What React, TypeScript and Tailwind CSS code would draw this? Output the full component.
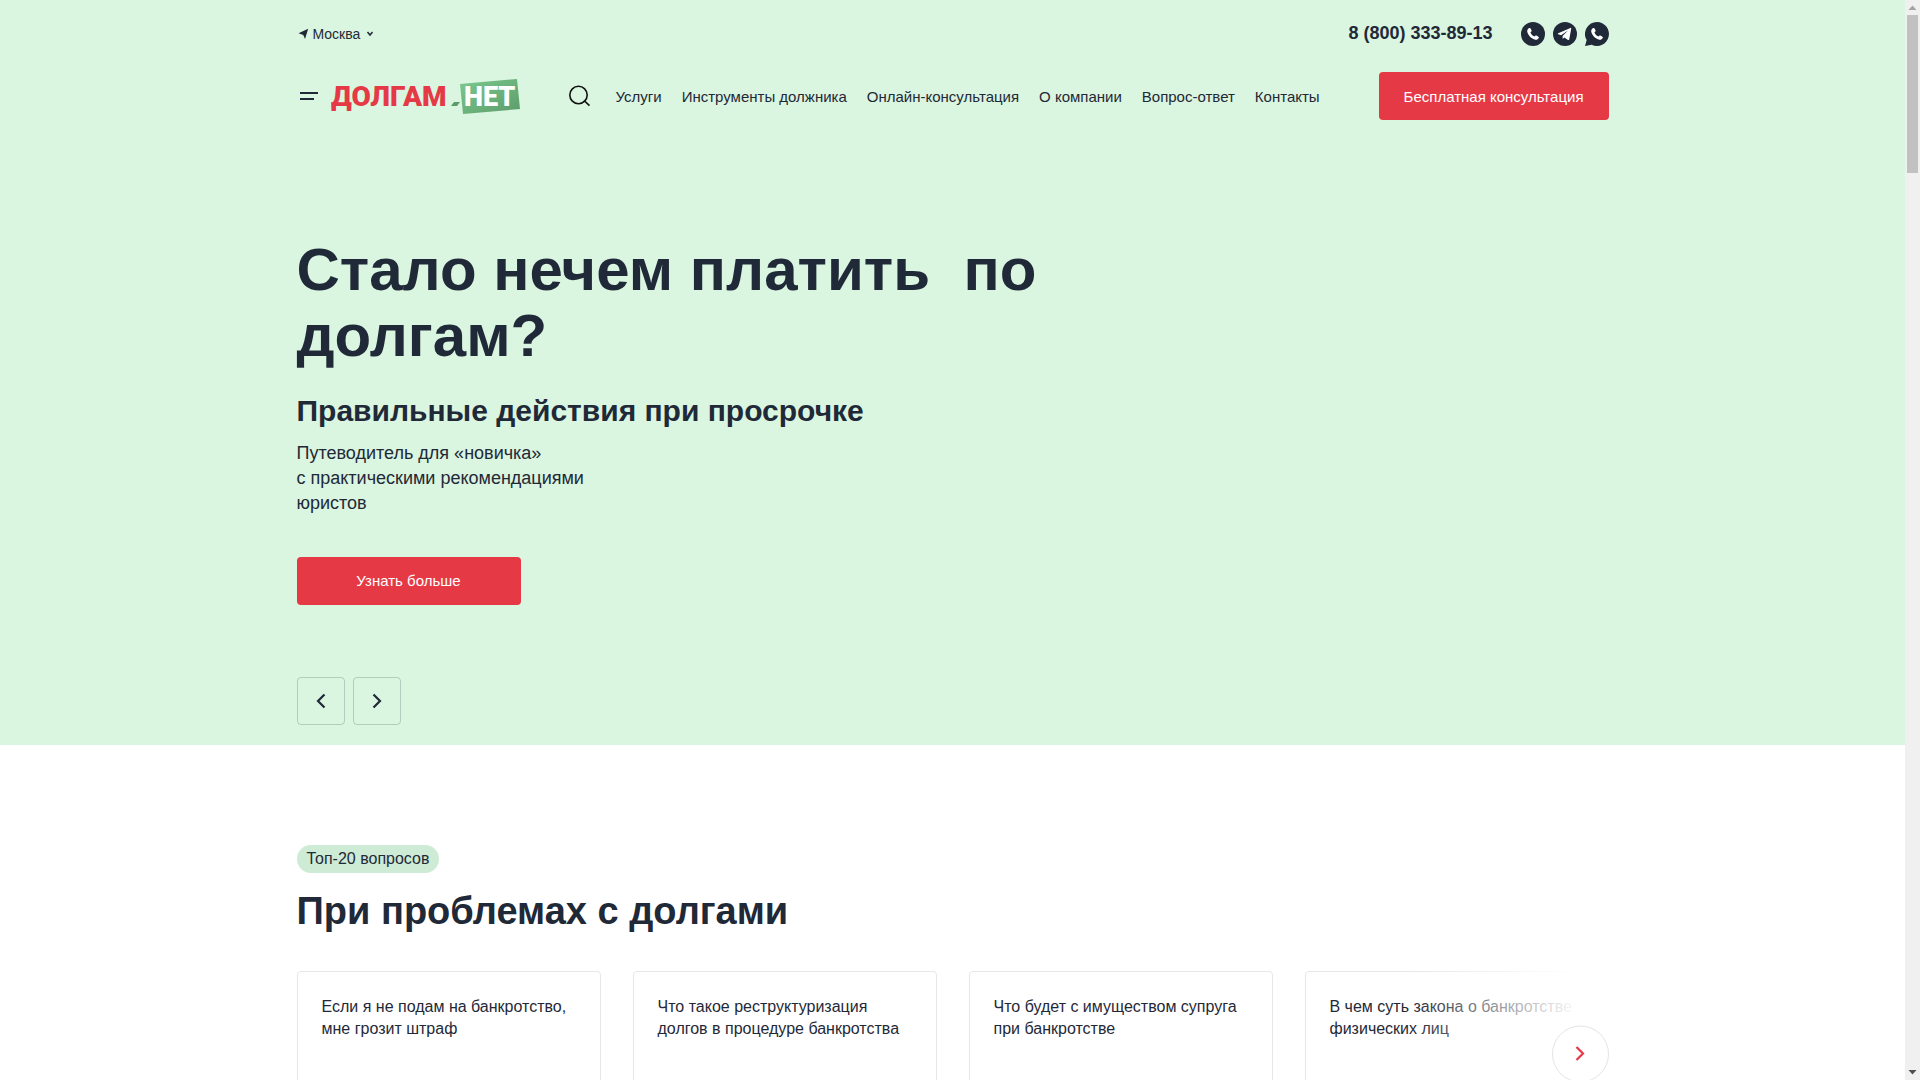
import React from "react";

const NAV = ["Услуги", "Инструменты должника", "Онлайн-консультация", "О компании", "Вопрос-ответ", "Контакты"];

const QUESTIONS = [
  "Если я не подам на банкротство, мне грозит штраф",
  "Что такое реструктуризация долгов в процедуре банкротства",
  "Что будет с имуществом супруга при банкротстве",
  "В чем суть закона о банкротстве физических лиц",
];

const HANDSET =
  "M8.300 6.100c-1.400.600-2.300 2-2.100 3.500.8 4 4.100 7.300 8.200 8.200 1.400.300 2.600-.4 3.300-1.700.3-.5.2-1-.3-1.300l-1.900-1.200c-.4-.3-.9-.2-1.200.1l-.9.8c-2-.8-3.600-2.400-3.900-4.300l.8-.6c.4-.3.500-.7.300-1.200l-1-1.900c-.3-.5-.8-.7-1.300-.4z";

function Chevron({ dir }: { dir: "left" | "right" }) {
  return (
    <svg width="16" height="16" viewBox="0 0 16 16" fill="none" stroke="currentColor" strokeWidth="2.2" aria-hidden="true">
      <path d={dir === "left" ? "M11.500 1.500 5 8l6.500 6.500" : "M4.500 1.500 11 8l-6.500 6.500"} />
    </svg>
  );
}

function Logo() {
  return (
    <a href="#" aria-label="Долгам.нет" className="ml-3 block shrink-0">
      <svg width="190" height="38" viewBox="0 0 190 38" aria-hidden="true">
        <defs>
          <linearGradient id="plate" x1="0" y1="0" x2="1" y2="1">
            <stop offset="0" stopColor="#7bc98d" />
            <stop offset="1" stopColor="#5c9c6b" />
          </linearGradient>
        </defs>
        <text x="0" y="29" fill="#e63946" fontFamily="Roboto, sans-serif" fontWeight="900" fontSize="28">
          ДОЛГАМ
        </text>
        <path d="M123 25h6l-3 4h-6z" fill="#5c9c6b" />
        <path d="M129 7 186 2l3 30-57 5z" fill="url(#plate)" />
        <text x="133" y="29" fill="#fff" fontFamily="Roboto, sans-serif" fontWeight="900" fontSize="27">
          НЕТ
        </text>
      </svg>
    </a>
  );
}

function Header() {
  return (
    <header>
      <div className="flex h-[68px] items-center justify-between">
        <button className="flex items-center text-sm">
          <svg width="16" height="12" viewBox="0 0 16 12" fill="currentColor" aria-hidden="true">
            <path d="M11.200.8 8 11 6.300 7 1.500 5.200z" />
          </svg>
          Москва
          <svg className="ml-1.5" width="8" height="8" viewBox="0 0 8 8" fill="none" stroke="currentColor" strokeWidth="1.500" aria-hidden="true">
            <path d="m1.500 2 2.500 3 2.500-3" />
          </svg>
        </button>
        <div className="flex items-center">
          <a href="tel:88003338913" className="mr-7 pb-0.5 text-lg leading-6 font-bold">8 (800) 333-89-13</a>
          <div className="flex gap-2">
            <a href="#phone" aria-label="Телефон">
              <svg width="24" height="24" viewBox="0 0 24 24" aria-hidden="true">
                <circle cx="12" cy="12" r="12" fill="#1f2937" />
                <path d={HANDSET} fill="#fff" />
              </svg>
            </a>
            <a href="#telegram" aria-label="Telegram">
              <svg width="24" height="24" viewBox="0 0 24 24" aria-hidden="true">
                <circle cx="12" cy="12" r="12" fill="#1f2937" />
                <path d="M17.400 5.900 5.200 11.200c-.6.300-.6.800 0 1l2.900 1 6.900-4.700-5.400 5.500.100 3 1.700-1.600 3.600 2.500c.6.400 1 .2 1.200-.5l2-10.700c.100-.7-.2-1-.8-.8z" fill="#fff" />
              </svg>
            </a>
            <a href="#whatsapp" aria-label="WhatsApp">
              <svg width="24" height="24" viewBox="0 0 24 24" aria-hidden="true">
                <path d="M12 0a12 12 0 1 1-5.300 22.800L0 24l1.700-5.900A12 12 0 0 1 12 0z" fill="#1f2937" />
                <path d={HANDSET} fill="#fff" />
              </svg>
            </a>
          </div>
        </div>
      </div>
      <div className="mt-1 flex h-12 items-center">
        <button aria-label="Меню" className="flex w-[22px] flex-col gap-1 pl-[3px]">
          <span className="h-0.5 w-[18px] bg-[#1f2937]" />
          <span className="h-0.5 w-3.5 bg-[#1f2937]" />
        </button>
        <Logo />
        <button aria-label="Поиск" className="ml-[47px]">
          <svg width="24" height="24" viewBox="0 0 24 24" fill="none" stroke="#111" strokeWidth="1.600" aria-hidden="true">
            <circle cx="10.500" cy="11" r="8.700" />
            <path d="m16 16.500 5.500 5.200" />
          </svg>
        </button>
        <nav className="ml-6 flex gap-5 pt-0.5 text-[15px] whitespace-nowrap">
          {NAV.map((n) => (
            <a key={n} href="#">{n}</a>
          ))}
        </nav>
        <button className="ml-auto h-12 rounded bg-[#e63946] px-[25px] pt-0.5 text-[15px] whitespace-nowrap text-white">
          Бесплатная консультация
        </button>
      </div>
    </header>
  );
}

function Hero() {
  return (
    <section className="pt-[117px] pb-5">
      <h1 className="max-w-[800px] text-[60px] leading-[66px] font-bold">Стало нечем платить&nbsp; по долгам?</h1>
      <h2 className="mt-6 text-[30px] leading-9 font-bold">Правильные действия при просрочке</h2>
      <p className="mt-3 max-w-[300px] text-lg leading-[25px]">
        Путеводитель для «новичка»
        <br />
        с практическими рекомендациями юристов
      </p>
      <button className="mt-[41px] block h-12 w-56 rounded bg-[#e63946] text-[15px] text-white">Узнать больше</button>
      <div className="mt-[72px] flex gap-2">
        <button aria-label="Назад" className="flex size-12 items-center justify-center rounded border border-[#1f2937]/20">
          <Chevron dir="left" />
        </button>
        <button aria-label="Вперёд" className="flex size-12 items-center justify-center rounded border border-[#1f2937]/20">
          <Chevron dir="right" />
        </button>
      </div>
    </section>
  );
}

function Questions() {
  return (
    <section className="mx-auto max-w-[1312px] pt-[100px]">
      <span className="inline-block rounded-full bg-[#cdebd5] px-2.5 leading-7">Топ-20 вопросов</span>
      <h2 className="mt-3.5 text-[38px] leading-[48px] font-bold">При проблемах с долгами</h2>
      <div className="relative mt-9">
        <div className="grid grid-cols-4 gap-8">
          {QUESTIONS.map((q) => (
            <a key={q} href="#" className="block h-[165px] rounded border border-[#e5e7e9] p-6 leading-[22px]">
              {q}
            </a>
          ))}
        </div>
        <div className="pointer-events-none absolute inset-y-0 right-0 w-[200px] bg-linear-to-l from-white from-15% to-white/0" />
        <button
          aria-label="Следующие вопросы"
          className="absolute top-1/2 right-0 flex size-[57px] -translate-y-1/2 items-center justify-center rounded-full border border-[#e2e4e8] bg-white text-[#e63946]"
        >
          <Chevron dir="right" />
        </button>
      </div>
    </section>
  );
}

function ScrollRail() {
  return (
    <div className="flex w-[15px] shrink-0 flex-col items-center bg-[#f0f0f0]" aria-hidden="true">
      <svg width="15" height="15" viewBox="0 0 15 15">
        <path d="m7.500 5.500 4 4.500h-8z" fill="#a3a3a3" />
      </svg>
      <div className="h-[158px] w-[11px] bg-[#c1c1c1]" />
      <svg className="mt-auto" width="15" height="15" viewBox="0 0 15 15">
        <path d="m7.500 9.500 4-4.500h-8z" fill="#505050" />
      </svg>
    </div>
  );
}

export default function App() {
  return (
    <div className="flex h-screen overflow-hidden bg-white font-['Liberation_Sans',Arial,sans-serif] text-base text-[#1f2937]">
      <main className="min-w-0 flex-1 overflow-hidden">
        <div className="bg-[#daf5e0]">
          <div className="mx-auto max-w-[1312px]">
            <Header />
            <Hero />
          </div>
        </div>
        <Questions />
      </main>
      <ScrollRail />
    </div>
  );
}
